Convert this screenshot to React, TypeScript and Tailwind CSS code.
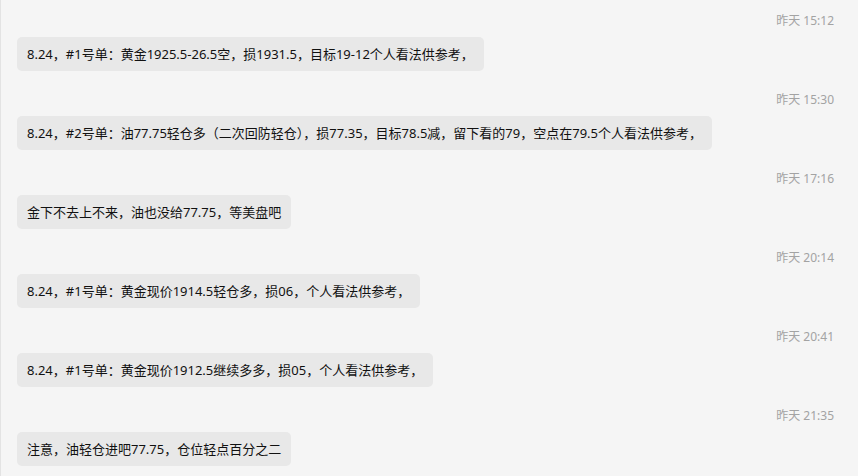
const messages = [
  { time: "昨天 15:12", text: "8.24，#1号单：黄金1925.5-26.5空，损1931.5，目标19-12个人看法供参考，" },
  { time: "昨天 15:30", text: "8.24，#2号单：油77.75轻仓多（二次回防轻仓），损77.35，目标78.5减，留下看的79，空点在79.5个人看法供参考，" },
  { time: "昨天 17:16", text: "金下不去上不来，油也没给77.75，等美盘吧" },
  { time: "昨天 20:14", text: "8.24，#1号单：黄金现价1914.5轻仓多，损06，个人看法供参考，" },
  { time: "昨天 20:41", text: "8.24，#1号单：黄金现价1912.5继续多多，损05，个人看法供参考，" },
  { time: "昨天 21:35", text: "注意，油轻仓进吧77.75，仓位轻点百分之二" },
];

export default function App() {
  return (
    <div
      className="w-[858px] h-[476px] overflow-hidden bg-[#f5f5f5] border-l border-[#e3e3e3]"
      style={{ fontFamily: '"Noto Sans", "Noto Sans CJK SC", sans-serif' }}
    >
      <div className="flex flex-col gap-[21px] pt-[13px] pl-[16px] pr-[24px]">
        {messages.map((m) => (
          <div key={m.time} className="flex flex-col items-start">
            <div className="self-end h-[16px] leading-[16px] text-[12px] text-[#a3a3a3]">{m.time}</div>
            <div className="mt-[8px] h-[34px] leading-[34px] px-[10px] rounded-[5px] bg-[#e8e8e8] text-[13px] text-[#111] whitespace-nowrap">
              {m.text}
            </div>
          </div>
        ))}
      </div>
    </div>
  );
}
